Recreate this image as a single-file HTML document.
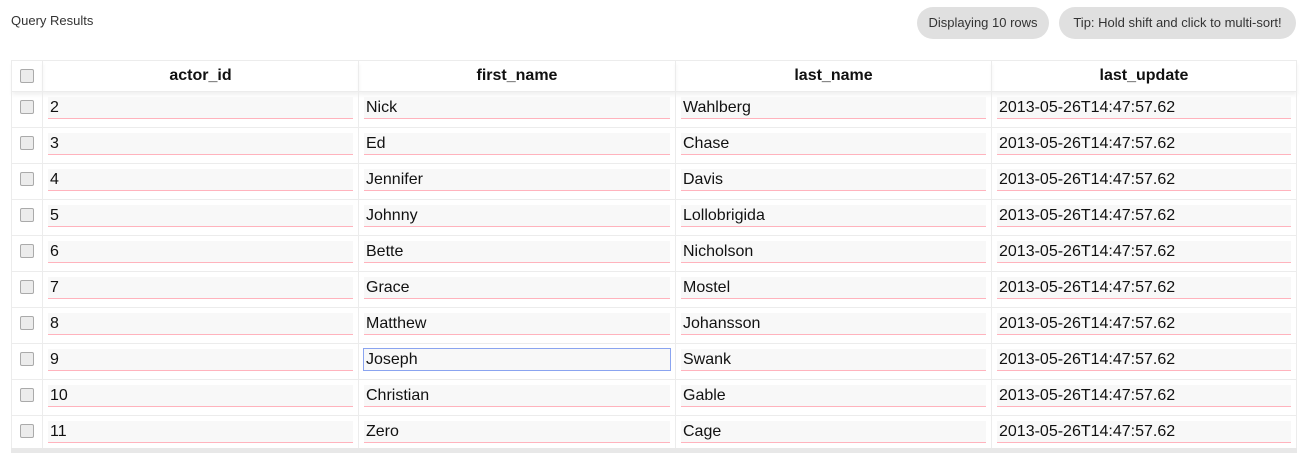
<!DOCTYPE html>
<html><head><style>
body{margin:0;width:1310px;height:453px;background:#fff;font-family:"Liberation Sans",Arial,sans-serif;overflow:hidden;position:relative}
.title{position:absolute;left:11px;top:13px;font-size:13px;color:#333}
.pill{position:absolute;top:7px;height:32px;line-height:32px;border-radius:16px;background:#e0e0e0;font-size:13px;color:#333;text-align:center}
table{position:absolute;left:11px;top:60px;border-collapse:collapse;table-layout:fixed;width:1285px}
th,td{border:1px solid #ececec;padding:0}
th{height:30px;font-size:16px;font-weight:bold;color:#111;box-shadow:0 3px 4px rgba(0,0,0,.06)}
td{height:35px;vertical-align:top}
.cb{width:12px;height:12px;border:1px solid #aaa;border-radius:2px;background:#ececec;margin:0 auto}
td .cb{margin-top:8px}
.in{margin:5px 5px 0;height:21px;background:#f8f8f8;box-shadow:0 1px 0 #ffb3bd;font-size:16px;line-height:21px;padding-left:2px;color:#111}
.sel{outline:1px solid #8aa4f0}
.bot{position:absolute;left:11px;top:448px;width:1286px;height:5px;background:#e8e8e8}
</style></head><body>
<div class="title">Query Results</div>
<div class="pill" style="left:917px;width:132px">Displaying 10 rows</div>
<div class="pill" style="left:1059px;width:237px">Tip: Hold shift and click to multi-sort!</div>
<table>
<colgroup><col style="width:31px"><col style="width:316px"><col style="width:317px"><col style="width:316px"><col style="width:305px"></colgroup>
<tr><th><div class="cb"></div></th><th>actor_id</th><th>first_name</th><th>last_name</th><th>last_update</th></tr>
<tr><td><div class="cb"></div></td><td><div class="in">2</div></td><td><div class="in">Nick</div></td><td><div class="in">Wahlberg</div></td><td><div class="in">2013-05-26T14:47:57.62</div></td></tr>
<tr><td><div class="cb"></div></td><td><div class="in">3</div></td><td><div class="in">Ed</div></td><td><div class="in">Chase</div></td><td><div class="in">2013-05-26T14:47:57.62</div></td></tr>
<tr><td><div class="cb"></div></td><td><div class="in">4</div></td><td><div class="in">Jennifer</div></td><td><div class="in">Davis</div></td><td><div class="in">2013-05-26T14:47:57.62</div></td></tr>
<tr><td><div class="cb"></div></td><td><div class="in">5</div></td><td><div class="in">Johnny</div></td><td><div class="in">Lollobrigida</div></td><td><div class="in">2013-05-26T14:47:57.62</div></td></tr>
<tr><td><div class="cb"></div></td><td><div class="in">6</div></td><td><div class="in">Bette</div></td><td><div class="in">Nicholson</div></td><td><div class="in">2013-05-26T14:47:57.62</div></td></tr>
<tr><td><div class="cb"></div></td><td><div class="in">7</div></td><td><div class="in">Grace</div></td><td><div class="in">Mostel</div></td><td><div class="in">2013-05-26T14:47:57.62</div></td></tr>
<tr><td><div class="cb"></div></td><td><div class="in">8</div></td><td><div class="in">Matthew</div></td><td><div class="in">Johansson</div></td><td><div class="in">2013-05-26T14:47:57.62</div></td></tr>
<tr><td><div class="cb"></div></td><td><div class="in">9</div></td><td><div class="in sel">Joseph</div></td><td><div class="in">Swank</div></td><td><div class="in">2013-05-26T14:47:57.62</div></td></tr>
<tr><td><div class="cb"></div></td><td><div class="in">10</div></td><td><div class="in">Christian</div></td><td><div class="in">Gable</div></td><td><div class="in">2013-05-26T14:47:57.62</div></td></tr>
<tr><td><div class="cb"></div></td><td><div class="in">11</div></td><td><div class="in">Zero</div></td><td><div class="in">Cage</div></td><td><div class="in">2013-05-26T14:47:57.62</div></td></tr>
</table>
<div class="bot"></div>
</body></html>
